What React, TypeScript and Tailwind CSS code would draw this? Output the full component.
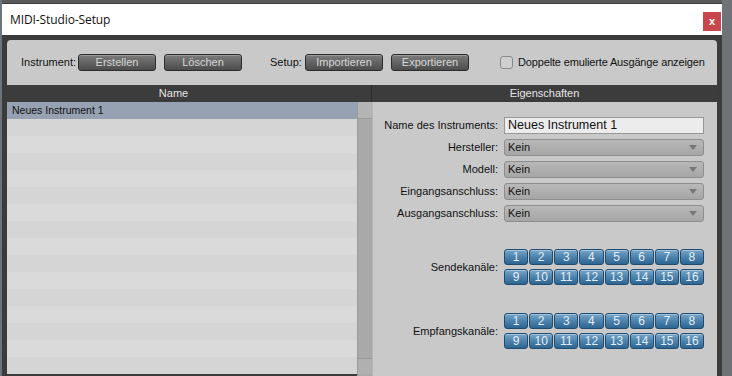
import React from "react";

const GrayBtn = ({ label }: { label: string }) => (
  <div className="w-[78px] h-[17px] rounded-[3px] border border-[#2c2c2c] bg-linear-to-b from-[#7c7c7c] to-[#4c4c4c] shadow-[inset_0_1px_0_rgba(255,255,255,0.25)] flex items-center justify-center text-[11px] text-[#d6d6d6] leading-none">
    {label}
  </div>
);

const Select = () => (
  <div className="w-[200px] h-[17px] rounded-[3px] border border-[#8e8e8e] bg-linear-to-b from-[#b8b8b8] to-[#a6a6a6] flex items-center justify-between pl-[3px] pr-[6px] text-[11px] text-[#111] leading-none">
    <span>Kein</span>
    <svg width="8" height="5" viewBox="0 0 8 5">
      <path d="M0 0 L8 0 L4 5 Z" fill="#777" />
    </svg>
  </div>
);

const ChanGrid = () => (
  <div className="grid grid-cols-8 gap-x-[1px] gap-y-[4px] w-[200px]">
    {Array.from({ length: 16 }, (_, i) => (
      <div
        key={i}
        className="h-[16px] rounded-[3px] border border-[#1f4c70] bg-linear-to-b from-[#78a6c9] via-[#4d83ad] to-[#2d6591] shadow-[inset_0_1px_0_rgba(255,255,255,0.35)] flex items-center justify-center text-[12px] text-[#e4edf4] leading-none"
      >
        {i + 1}
      </div>
    ))}
  </div>
);

const Row = ({ label, children }: { label: string; children: React.ReactNode }) => (
  <div className="flex items-center">
    <div className="w-[125px] text-right text-[11px] text-[#111] leading-none">{label}</div>
    <div className="ml-[6px]">{children}</div>
  </div>
);

export default function App() {
  const rows = Array.from({ length: 16 }, (_, i) => i);
  return (
    <div className="w-[732px] h-[376px] overflow-hidden bg-[#5f6266] font-['Liberation_Sans',Arial,sans-serif] flex">
      <div className="w-[2px] bg-[#6d737a]" />
      <div className="flex flex-col">
        <div className="h-[4px] bg-[#5a5a5a] border-b border-[#3e3e3e]" />
        <div className="w-[720px] h-[372px] flex flex-col">
          {/* title bar */}
          <div className="h-[31px] bg-white flex items-center justify-between pl-[8px] pr-[1px]">
            <span className="text-[12px] text-[#111] font-['Open_Sans',sans-serif] tracking-[-0.1px]">MIDI-Studio-Setup</span>
            <div className="mt-[4px] w-[18px] h-[19px] bg-[#c8474c] flex items-center justify-center text-white text-[11px] font-bold leading-none">
              x
            </div>
          </div>
          {/* body */}
          <div className="flex-1 bg-[#3b3b3b] px-[5px] pt-[5px] flex flex-col min-h-0">
            <div className="flex-1 flex flex-col rounded-t-[4px] overflow-hidden min-h-0">
              {/* toolbar */}
              <div className="h-[45px] bg-[#c9c9c9] flex items-center pl-[14px] text-[11px] text-[#111] leading-none">
                <span className="w-[52px]">Instrument:</span>
                <div className="ml-[5px]"><GrayBtn label="Erstellen" /></div>
                <div className="ml-[8px]"><GrayBtn label="Löschen" /></div>
                <span className="ml-[28px] w-[30px]">Setup:</span>
                <div className="ml-[5px]"><GrayBtn label="Importieren" /></div>
                <div className="ml-[8px]"><GrayBtn label="Exportieren" /></div>
                <div className="ml-[31px] w-[13px] h-[13px] rounded-[3px] border border-[#8a8a8a] bg-[#cfcfcf]" />
                <span className="ml-[5px] whitespace-nowrap tracking-[-0.15px]">Doppelte emulierte Ausgänge anzeigen</span>
              </div>
              {/* header */}
              <div className="h-[17px] bg-[#3c3c3c] flex text-[11px] text-[#e6e6e6] leading-none">
                <div className="w-[365px] flex items-center border-r border-[#2e2e2e]">
                  <span className="w-[333px] text-center">Name</span>
                </div>
                <div className="flex-1 flex items-center justify-center">Eigenschaften</div>
              </div>
              {/* content */}
              <div className="flex-1 flex min-h-0">
                <div className="w-[350px] flex flex-col">
                  {rows.map((i) => (
                    <div
                      key={i}
                      className={
                        "h-[17px] shrink-0 flex items-center pl-[5px] text-[10.5px] text-[#111] leading-none " +
                        (i === 0 ? "bg-[#96a1b2]" : i % 2 === 1 ? "bg-[#d5d5d5]" : "bg-[#dadada]")
                      }
                    >
                      {i === 0 ? "Neues Instrument 1" : ""}
                    </div>
                  ))}
                </div>
                <div className="w-[15px] bg-[#a9a9a9] border-l border-[#9c9c9c] flex flex-col justify-between">
                  <div className="h-[17px] bg-[#b4b4b4] border-b border-[#999]" />
                  <div className="h-[16px] bg-[#b0b0b0] border-t border-[#999] mb-[2px]" />
                </div>
                <div className="flex-1 bg-[#c9c9c9] flex flex-col pt-[15px] border-l border-[#b5b5b5]">
                  <div className="flex flex-col gap-[5px]">
                    <Row label="Name des Instruments:">
                      <div className="w-[200px] h-[17px] border border-[#979797] bg-[#ececec] flex items-center pl-[3px] text-[12.5px] text-[#111] leading-none">
                        Neues Instrument 1
                      </div>
                    </Row>
                    <Row label="Hersteller:"><Select /></Row>
                    <Row label="Modell:"><Select /></Row>
                    <Row label="Eingangsanschluss:"><Select /></Row>
                    <Row label="Ausgangsanschluss:"><Select /></Row>
                  </div>
                  <div className="mt-[27px]">
                    <Row label="Sendekanäle:"><ChanGrid /></Row>
                  </div>
                  <div className="mt-[28px]">
                    <Row label="Empfangskanäle:"><ChanGrid /></Row>
                  </div>
                </div>
              </div>
            </div>
          </div>
        </div>
      </div>
      <div className="flex-1 bg-[#6f7378]" />
    </div>
  );
}
